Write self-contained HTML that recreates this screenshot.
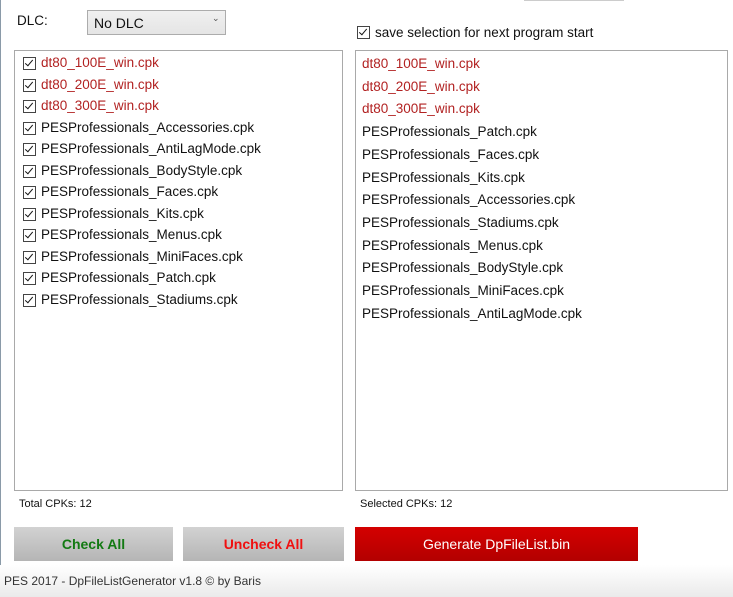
<!DOCTYPE html>
<html><head><style>
body{margin:0;width:733px;height:597px;background:#fff;position:relative;overflow:hidden;font-family:"Liberation Sans",sans-serif;font-size:13.5px;color:#111}
.a{position:absolute}
.box{position:absolute;border:1px solid #a9a9a9;background:#fff}
.cb{display:inline-block;width:11px;height:11px;border:1px solid #444;position:absolute;background:#fff}
.cb:after{content:"";position:absolute;left:3px;top:0px;width:3px;height:7px;border:solid #111;border-width:0 1.6px 1.6px 0;transform:rotate(40deg)}
.r{color:#b22222}
.btn{position:absolute;top:527px;height:34px;background:linear-gradient(#d2d2d2,#b5b5b5);font-weight:bold;font-size:14px;text-align:center;line-height:34px}
</style></head><body>
<div class="a" style="left:0;top:0;width:1px;height:597px;background:#8a9aa8"></div>
<div class="a" style="left:524px;top:0;width:100px;height:1px;background:#ccc"></div>
<div class="a" style="left:17px;top:13px">DLC:</div>
<div class="a" style="left:87px;top:10px;width:137px;height:23px;border:1px solid #acacac;background:linear-gradient(#f0f0f0,#e5e5e5)"><span class="a" style="left:6px;top:4px;font-size:14px">No DLC</span><span class="a" style="left:124px;top:2px;font-size:9px;color:#555">&#8964;</span></div>
<span class="cb" style="left:357px;top:26px"></span>
<div class="a" style="left:375px;top:25px">save selection for next program start</div>
<div class="box" style="left:14px;top:50px;width:327px;height:439px"></div>
<div class="box" style="left:355px;top:50px;width:371px;height:439px"></div>
<div id="L"></div>
<script>
var l=[["dt80_100E_win.cpk",1],["dt80_200E_win.cpk",1],["dt80_300E_win.cpk",1],["PESProfessionals_Accessories.cpk"],["PESProfessionals_AntiLagMode.cpk"],["PESProfessionals_BodyStyle.cpk"],["PESProfessionals_Faces.cpk"],["PESProfessionals_Kits.cpk"],["PESProfessionals_Menus.cpk"],["PESProfessionals_MiniFaces.cpk"],["PESProfessionals_Patch.cpk"],["PESProfessionals_Stadiums.cpk"]];
var r=[["dt80_100E_win.cpk",1],["dt80_200E_win.cpk",1],["dt80_300E_win.cpk",1],["PESProfessionals_Patch.cpk"],["PESProfessionals_Faces.cpk"],["PESProfessionals_Kits.cpk"],["PESProfessionals_Accessories.cpk"],["PESProfessionals_Stadiums.cpk"],["PESProfessionals_Menus.cpk"],["PESProfessionals_BodyStyle.cpk"],["PESProfessionals_MiniFaces.cpk"],["PESProfessionals_AntiLagMode.cpk"]];
var h="";
l.forEach(function(e,i){var y=56+i*21.5;h+='<span class="cb" style="left:23px;top:'+(y+1)+'px"></span><div class="a'+(e[1]?' r':'')+'" style="left:41px;top:'+(y-1)+'px">'+e[0]+'</div>';});
r.forEach(function(e,i){var y=56+i*22.7;h+='<div class="a'+(e[1]?' r':'')+'" style="left:362px;top:'+y+'px">'+e[0]+'</div>';});
document.getElementById("L").innerHTML=h;
</script>
<div class="a" style="left:19px;top:498px;font-size:11px">Total CPKs: 12</div>
<div class="a" style="left:360px;top:498px;font-size:11px">Selected CPKs: 12</div>
<div class="btn" style="left:14px;width:159px;color:#137a13">Check All</div>
<div class="btn" style="left:183px;width:161px;color:#f01010">Uncheck All</div>
<div class="btn" style="left:355px;width:283px;background:linear-gradient(#d40000,#b30000);color:#fff;font-weight:normal">Generate DpFileList.bin</div>
<div class="a" style="left:0;top:565px;width:733px;height:32px;background:linear-gradient(#fff,#eaeaea)"></div>
<div class="a" style="left:4px;top:574px;font-size:12px;color:#333">PES 2017 - DpFileListGenerator v1.8 © by Baris</div>
</body></html>
